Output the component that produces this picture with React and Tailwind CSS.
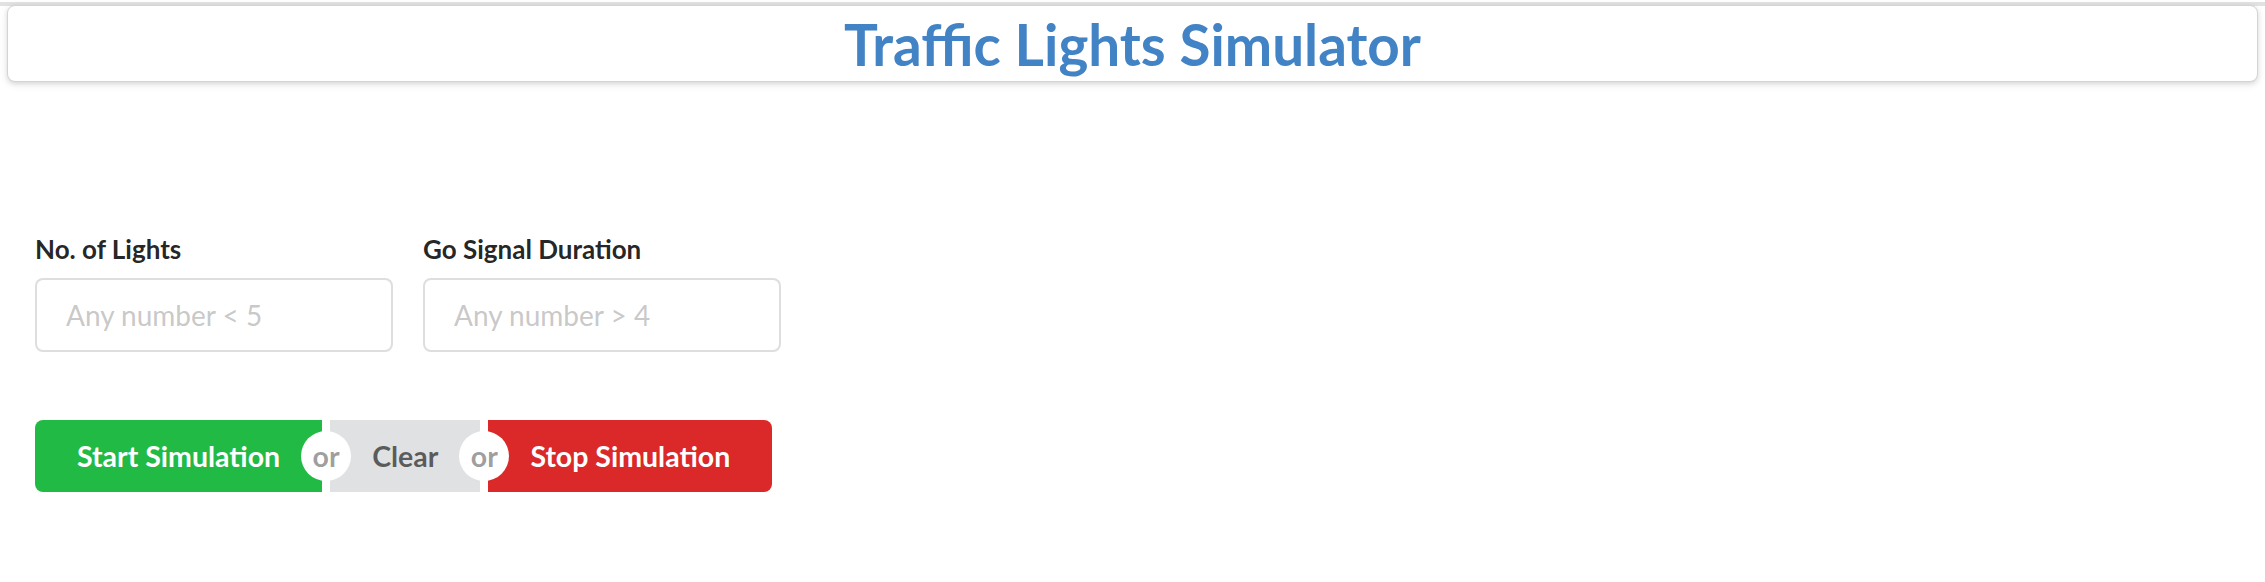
import React, { useState } from 'react';

const OrDivider = () => (
  <div className="relative w-[8px] z-10">
    <span className="absolute left-1/2 top-1/2 -ml-[25px] -mt-[25px] w-[50px] h-[50px] rounded-full bg-white text-center leading-[50px] font-bold text-[rgba(0,0,0,0.4)]">
      or
    </span>
  </div>
);

const Field = ({ label, placeholder, value, onChange }) => (
  <div className="w-[358px]">
    <label className="block mb-[10px] text-[26px] leading-[37px] font-bold text-[rgba(0,0,0,0.87)]">
      {label}
    </label>
    <input
      type="text"
      placeholder={placeholder}
      value={value}
      onChange={(e) => onChange(e.target.value)}
      className="w-full h-[74px] px-[29px] text-[28px] leading-[34px] bg-white border-2 border-[rgba(34,36,38,0.15)] rounded-[8px] text-[rgba(0,0,0,0.87)] placeholder-[rgba(191,191,191,0.87)] focus:outline-none focus:border-[#85b7d9]"
    />
  </div>
);

const App = () => {
  const [lights, setLights] = useState('');
  const [duration, setDuration] = useState('');

  const handleClear = () => {
    setLights('');
    setDuration('');
  };

  return (
    <div className="min-h-[582px] bg-white font-['Lato','Liberation_Sans',sans-serif]">
      <div className="h-[4px] mt-[2px] bg-[#e2e2e3]" />

      {/* Cabeçalho */}
      <div className="mx-[7px] -mt-[1px] h-[77px] flex items-center justify-center bg-white border border-[#d4d4d5] rounded-[8px] shadow-[0_2px_4px_0_rgba(34,36,38,0.12),0_2px_10px_0_rgba(34,36,38,0.08)]">
        <h1 className="text-[56.6px] leading-[72px] font-bold text-[#4183c4]">
          Traffic Lights Simulator
        </h1>
      </div>

      {/* Formulário */}
      <div className="pl-[35px] pt-[149px]">
        <div className="flex gap-[30px]">
          <Field label="No. of Lights" placeholder="Any number < 5" value={lights} onChange={setLights} />
          <Field label="Go Signal Duration" placeholder="Any number > 4" value={duration} onChange={setDuration} />
        </div>

        <div className="mt-[68px] flex text-[28.5px]">
          <button className="h-[72px] px-[42px] leading-[28px] font-bold text-white bg-[#21ba45] rounded-l-[8px]">
            Start Simulation
          </button>
          <OrDivider />
          <button
            onClick={handleClear}
            className="h-[72px] px-[42px] leading-[28px] font-bold text-[rgba(0,0,0,0.6)] bg-[#e0e1e2]"
          >
            Clear
          </button>
          <OrDivider />
          <button className="h-[72px] px-[42px] leading-[28px] font-bold text-white bg-[#db2828] rounded-r-[8px]">
            Stop Simulation
          </button>
        </div>
      </div>
    </div>
  );
};

export default App;
